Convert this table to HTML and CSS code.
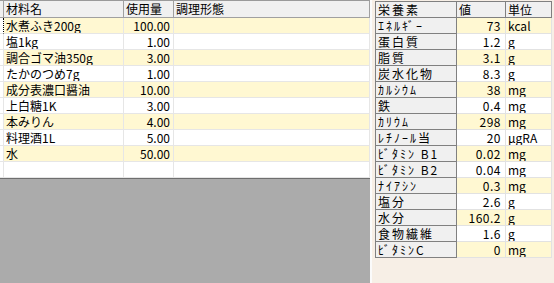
FILE: index.html
```html
<!DOCTYPE html>
<html lang="ja">
<head>
<meta charset="utf-8">
<link rel="stylesheet" href="styles.css">
</head>
<body>
<div class="app">
  <div class="left">
    <div class="grid">
      <div class="row head"><div class="rh"></div><div>材料名</div><div>使用量</div><div>調理形態</div></div>
      <div class="row y"><div class="rh focus"></div><div>水煮ふき200g</div><div class="num">100.00</div><div></div></div>
      <div class="row"><div class="rh"></div><div>塩1kg</div><div class="num">1.00</div><div></div></div>
      <div class="row y"><div class="rh"></div><div>調合ゴマ油350g</div><div class="num">3.00</div><div></div></div>
      <div class="row"><div class="rh"></div><div>たかのつめ7g</div><div class="num">1.00</div><div></div></div>
      <div class="row y"><div class="rh"></div><div>成分表濃口醤油</div><div class="num">10.00</div><div></div></div>
      <div class="row"><div class="rh"></div><div>上白糖1K</div><div class="num">3.00</div><div></div></div>
      <div class="row y"><div class="rh"></div><div>本みりん</div><div class="num">4.00</div><div></div></div>
      <div class="row"><div class="rh"></div><div>料理酒1L</div><div class="num">5.00</div><div></div></div>
      <div class="row y"><div class="rh"></div><div>水</div><div class="num">50.00</div><div></div></div>
      <div class="row"><div class="rh"></div><div></div><div class="num"></div><div></div></div>
    </div>
    <div class="fill"></div>
  </div>
  <div class="split"></div>
  <div class="right">
    <div class="ntable">
      <div class="row head"><div class="k">栄養素</div><div>値</div><div>単位</div></div>
      <div class="row y"><div class="k">ｴﾈﾙｷﾞｰ</div><div class="num">73</div><div>kcal</div></div>
      <div class="row"><div class="k">蛋白質</div><div class="num">1.2</div><div>g</div></div>
      <div class="row y"><div class="k">脂質</div><div class="num">3.1</div><div>g</div></div>
      <div class="row"><div class="k">炭水化物</div><div class="num">8.3</div><div>g</div></div>
      <div class="row y"><div class="k">ｶﾙｼｳﾑ</div><div class="num">38</div><div>mg</div></div>
      <div class="row"><div class="k">鉄</div><div class="num">0.4</div><div>mg</div></div>
      <div class="row y"><div class="k">ｶﾘｳﾑ</div><div class="num">298</div><div>mg</div></div>
      <div class="row"><div class="k">ﾚﾁﾉｰﾙ当</div><div class="num">20</div><div>μgRA</div></div>
      <div class="row y"><div class="k">ﾋﾞﾀﾐﾝ B1</div><div class="num">0.02</div><div>mg</div></div>
      <div class="row"><div class="k">ﾋﾞﾀﾐﾝ B2</div><div class="num">0.04</div><div>mg</div></div>
      <div class="row y"><div class="k">ﾅｲｱｼﾝ</div><div class="num">0.3</div><div>mg</div></div>
      <div class="row"><div class="k">塩分</div><div class="num">2.6</div><div>g</div></div>
      <div class="row y"><div class="k">水分</div><div class="num">160.2</div><div>g</div></div>
      <div class="row"><div class="k">食物繊維</div><div class="num">1.6</div><div>g</div></div>
      <div class="row y"><div class="k">ﾋﾞﾀﾐﾝC</div><div class="num">0</div><div>mg</div></div>
    </div>
  </div>
</div>
</body>
</html>
```

FILE: styles.css
```css
* { box-sizing: border-box; }
html, body {
  margin: 0;
  padding: 0;
}
body {
  width: 554px;
  height: 283px;
  overflow: hidden;
  font-family: "Noto Sans CJK JP", "Noto Sans", sans-serif;
  font-size: 12px;
  color: #000;
  background: #f7efe6;
}
.app {
  display: flex;
  width: 554px;
  height: 283px;
}
.left {
  width: 370px;
  display: flex;
  flex-direction: column;
  background: #ffffff;
}
.grid {
  display: grid;
  grid-template-columns: 4px 120px 50px 196px;
  grid-template-rows: 18px;
  grid-auto-rows: 16px;
}
.row { display: contents; }
.grid .row > div {
  border-right: 1px solid #e6e6e6;
  border-bottom: 1px solid #e6e6e6;
  font-size: 12px;
  line-height: 15px;
  padding: 0 3px 0 2px;
  white-space: nowrap;
  overflow: hidden;
  background: #ffffff;
}
.grid .row.y > div { background: #fff8d2; }
.grid .row > div.rh { background: #ffffff; padding: 0; }
.grid .row > div.focus { border-right: 1px dotted #000; }
.grid .row.head > div {
  background: #f0f0f0;
  border-top: 1px solid #9a9a9a;
  border-bottom: 1px solid #a0a0a0;
  border-right: 1px solid #a0a0a0;
  line-height: 16px;
}
.num { text-align: right; }
.fill {
  flex: 1;
  background: #ababab;
  border-top: 1px solid #6e6e6e;
}
.split {
  width: 2px;
  background: #fbfbfb;
}
.right {
  flex: 1;
  padding: 1px 0 0 3px;
  background: #f7efe6;
}
.ntable {
  display: grid;
  width: 177px;
  grid-template-columns: 81px 49px 46px;
  grid-template-rows: 16px;
  grid-auto-rows: 16px;
  border-left: 1px solid #808080;
  border-top: 1px solid #808080;
}
.ntable .row > div {
  border-right: 1px solid #e2e2e2;
  border-bottom: 1px solid #e2e2e2;
  font-size: 12px;
  line-height: 15px;
  padding: 0 3px 0 2px;
  white-space: nowrap;
  overflow: hidden;
  background: #ffffff;
}
.ntable .row.y > div { background: #fff8d2; }
.ntable .row > div.k,
.ntable .row.head > div {
  background: #f0f0f0;
  border-right: 1px solid #808080;
  border-bottom: 1px solid #808080;
}
.ntable .row > div.k { letter-spacing: 2px; }
.ntable .row > div.num { padding-right: 4px; letter-spacing: 0.5px; }
```
